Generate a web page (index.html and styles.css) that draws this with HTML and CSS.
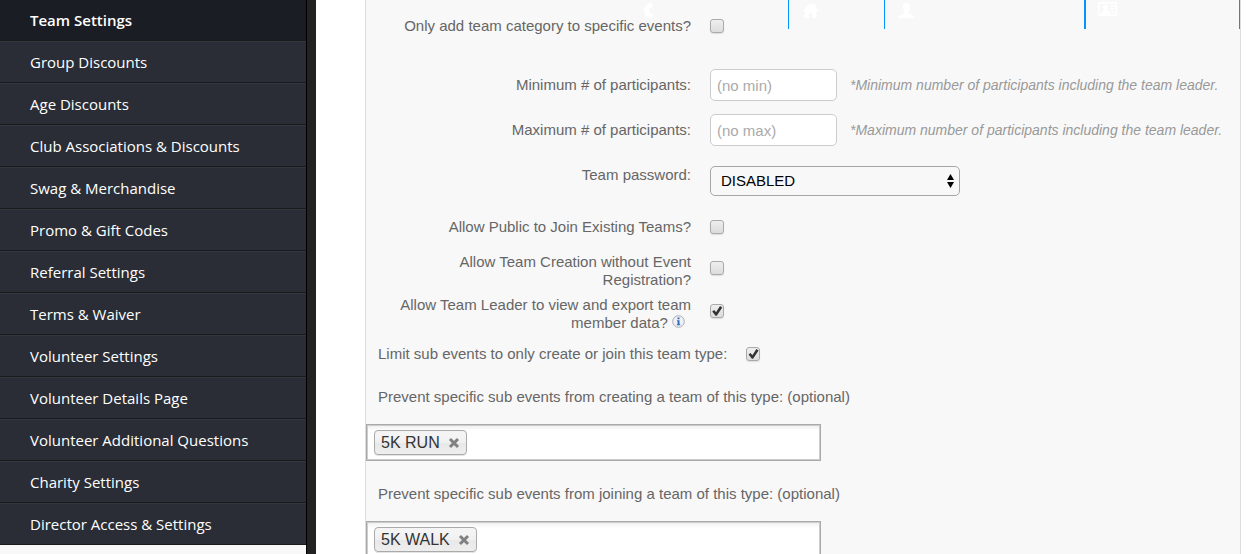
FILE: index.html
```html
<!DOCTYPE html>
<html lang="en">

<head>
    <meta charset="UTF-8">
    <meta name="viewport" content="width=device-width, initial-scale=1.0">
    <title>Team Settings</title>
    <link rel="stylesheet" href="styles.css">
</head>

<body>
    <nav class="sidebar">
        <ul class="menu">
            <li><a class="active" href="#">Team Settings</a></li>
            <li><a href="#">Group Discounts</a></li>
            <li><a href="#">Age Discounts</a></li>
            <li><a href="#">Club Associations &amp; Discounts</a></li>
            <li><a href="#">Swag &amp; Merchandise</a></li>
            <li><a href="#">Promo &amp; Gift Codes</a></li>
            <li><a href="#">Referral Settings</a></li>
            <li><a href="#">Terms &amp; Waiver</a></li>
            <li><a href="#">Volunteer Settings</a></li>
            <li><a href="#">Volunteer Details Page</a></li>
            <li><a href="#">Volunteer Additional Questions</a></li>
            <li><a href="#">Charity Settings</a></li>
            <li><a href="#">Director Access &amp; Settings</a></li>
        </ul>
    </nav>

    <main class="content">
        <form class="panel">
            <!-- floating top bar -->
            <div class="topbar">
                <a class="phone" href="#" aria-label="Call us">
                    <svg width="9" height="15" viewBox="0 0 9 15"><path d="M5 0 L8 0 L9 4 L6 5 Q4 7.5 6 10 L9 11 L8 15 L5 15 Q0 12 0 7.5 Q0 3 5 0Z" /></svg>
                </a>
                <a class="home" href="#" aria-label="Home">
                    <svg width="15" height="15" viewBox="0 0 15 15"><path d="M7.5 0 L10 2.4 V1 H12.5 V4.8 L15 7.4 V8.5 H13.3 V15 H9.2 V10 H5.8 V15 H1.7 V8.5 H0 V7.4Z" /></svg>
                </a>
                <a class="user" href="#" aria-label="Account">
                    <svg width="15" height="15" viewBox="0 0 15 15"><path d="M7.5 0 C10 0 11.3 1.8 11 4.5 C10.8 7 9.8 8 9.5 9 C9.5 10.5 10 11 12 11.5 C14 12 15 12.8 15 15 H0 C0 12.8 1 12 3 11.5 C5 11 5.5 10.5 5.5 9 C5.2 8 4.2 7 4 4.5 C3.7 1.8 5 0 7.5 0Z" /></svg>
                </a>
                <a class="card" href="#" aria-label="Contacts">
                    <svg width="19" height="14" viewBox="0 0 19 14"><path fill-rule="evenodd" d="M1 0H18Q19 0 19 1V13Q19 14 18 14H1Q0 14 0 13V1Q0 0 1 0Z M1.5 1.5V12.5H17.5V1.5Z" /><path d="M7.5 2.5C9.5 2.5 10 4 9.8 5.5C9.6 7 9 7.5 9 8.5C11 9.3 12.5 10 12.5 12.5H2.5C2.5 10 4 9.3 6 8.5C6 7.5 5.4 7 5.2 5.5C5 4 5.5 2.5 7.5 2.5ZM12.5 3H16V4.5H12.5ZM12.5 6H16V7.5H12.5ZM13.5 9H16V10.5H13.5Z" /></svg>
                </a>
            </div>

            <div class="row first">
                <label for="specific">Only add team category to specific events?</label>
                <input type="checkbox" id="specific">
            </div>
            <div class="row">
                <label for="min">Minimum # of participants:</label>
                <input type="text" id="min" placeholder="(no min)">
                <em class="hint">*Minimum number of participants including the team leader.</em>
            </div>
            <div class="row">
                <label for="max">Maximum # of participants:</label>
                <input type="text" id="max" placeholder="(no max)">
                <em class="hint">*Maximum number of participants including the team leader.</em>
            </div>
            <div class="row password">
                <label for="password">Team password:</label>
                <span class="select">
                    <select id="password">
                        <option>DISABLED</option>
                        <option>ENABLED</option>
                    </select>
                    <svg width="7" height="14" viewBox="0 0 7 14"><path d="M0 6 L3.5 0 L7 6Z M0 8 H7 L3.5 14Z" /></svg>
                </span>
            </div>
            <div class="row public">
                <label for="public">Allow Public to Join Existing Teams?</label>
                <input type="checkbox" id="public">
            </div>
            <div class="row creation two-line">
                <label for="creation">Allow Team Creation without Event Registration?</label>
                <input type="checkbox" id="creation">
            </div>
            <div class="row two-line">
                <label for="leader">Allow Team Leader to view and export team member data?
                    <svg class="info" width="13" height="13" viewBox="0 0 13 13"><circle cx="6.5" cy="6.5" r="5.8" fill="#eef1f6" stroke="#a9acb3" /><path d="M5.5 2.5H7.5V4.3H5.5ZM5 5.2H7.5V9.2H8.3V10.3H4.8V9.2H5.6V6.3H5Z" fill="#2f68b8" /></svg>
                </label>
                <input type="checkbox" id="leader" checked>
            </div>
            <div class="row limit">
                <label for="limit">Limit sub events to only create or join this team type:</label>
                <input type="checkbox" id="limit" checked>
            </div>

            <label class="title" for="creating">Prevent specific sub events from creating a team of this type: (optional)</label>
            <div class="chosen">
                <span class="choice">5K RUN
                    <button type="button" aria-label="Remove 5K RUN"><svg width="12" height="12" viewBox="0 0 12 12"><path d="M2 2 L10 10 M10 2 L2 10" /></svg></button>
                </span>
                <input type="text" id="creating">
            </div>

            <label class="title" for="joining">Prevent specific sub events from joining a team of this type: (optional)</label>
            <div class="chosen">
                <span class="choice">5K WALK
                    <button type="button" aria-label="Remove 5K WALK"><svg width="12" height="12" viewBox="0 0 12 12"><path d="M2 2 L10 10 M10 2 L2 10" /></svg></button>
                </span>
                <input type="text" id="joining">
            </div>
        </form>
    </main>
</body>

</html>
```
FILE: styles.css
```css
* {
    box-sizing: border-box;
}

body {
    margin: 0;
    height: 100vh;
    display: flex;
    overflow: hidden;
    background: #fff;
    color: #666;
    font-family: "Liberation Sans", Arial, sans-serif;
    font-size: 15px;
    line-height: 18px;
}

/* sidebar */
.sidebar {
    flex: none;
    width: 316px;
    background: #f8f8f8;
    border-right: 9px solid #222;
    box-shadow: inset -1px 0 #000;
}

.menu {
    margin: 0;
    padding: 0;
    list-style: none;
}

.menu a {
    display: block;
    margin-right: 1px;
    padding: 9px 30px;
    border-top: 1px solid #34373d;
    border-bottom: 1px solid #17191d;
    background: #2a2d35;
    color: #fff;
    font: 400 15px/22px "Open Sans", sans-serif;
    text-decoration: none;
}

.menu .active {
    border-top: 0;
    background: #1a1d24;
    font-weight: 600;
}

/* form panel */
.content {
    flex: 1;
    padding: 0 9px 0 49px;
}

.panel {
    position: relative;
    height: 100vh;
    overflow: hidden;
    background: #f8f8f8;
    border: solid #ddd;
    border-width: 0 1px;
}

.topbar {
    position: absolute;
    top: 0;
    right: 0;
    display: flex;
    height: 29px;
}

.topbar a {
    padding: 3px 14px;
    border-right: 1px solid #0095ff;
}

.topbar svg {
    display: block;
    fill: #fff;
}

.phone {
    width: 159px;
}

.home {
    width: 96px;
}

.topbar .user {
    width: 201px;
    border-right-width: 2px;
}

.topbar .card {
    width: 154px;
    padding: 2px 12px;
}

.row {
    display: grid;
    grid-template-columns: 313px auto 1fr;
    column-gap: 19px;
    align-items: center;
    justify-items: start;
    margin: 0 12px 13px;
}

.row label {
    justify-self: end;
    text-align: right;
}

.first {
    margin-top: 17px;
    margin-bottom: 34px;
}

.password {
    align-items: start;
    margin-top: 20px;
    margin-bottom: 22px;
}

.public {
    margin-bottom: 17px;
}

.creation {
    margin-bottom: 7px;
}

.two-line {
    align-items: start;
}

.limit {
    grid-template-columns: auto 1fr;
    margin-bottom: 25px;
}

input[type="checkbox"] {
    appearance: none;
    width: 14px;
    height: 14px;
    margin: 0;
    border: 1px solid #aaa;
    border-radius: 3px;
    background: linear-gradient(#eee, #dcdcdc);
    box-shadow: 0 1px 1px #ddd;
}

.two-line input[type="checkbox"] {
    margin-top: 8px;
}

input[type="checkbox"]:checked::before {
    content: "";
    display: block;
    height: 12px;
    background: #333;
    clip-path: polygon(10% 55%, 27% 42%, 42% 60%, 75% 8%, 94% 20%, 48% 90%, 38% 90%);
}

.row input[type="text"] {
    width: 127px;
    height: 32px;
    padding: 0 6px;
    border: 1px solid #ccc;
    border-radius: 5px;
    background: #fff;
    font: inherit;
}

.row ::placeholder {
    color: #aaa;
}

.hint {
    margin-left: -6px;
    color: #999;
    font-size: 14px;
}

.select {
    position: relative;
}

.select select {
    display: block;
    appearance: none;
    width: 250px;
    height: 30px;
    padding: 0 10px;
    border: 1px solid #a6a6a6;
    border-radius: 5px;
    background: #f8f8f8;
    color: #000;
    font: inherit;
}

.select svg {
    position: absolute;
    top: 8px;
    right: 6px;
    pointer-events: none;
}

.info {
    margin-right: 6px;
}

/* multi selects */
.title {
    display: block;
    margin: 24px 12px 18px;
}

.chosen {
    display: flex;
    align-items: center;
    width: 455px;
    height: 37px;
    padding: 0 7px;
    border: 1px solid #aaa;
    box-shadow: inset 0 0 0 1px #ccc;
    background: linear-gradient(#eee, #fff 6px);
}

.choice {
    display: flex;
    align-items: center;
    gap: 8px;
    height: 25px;
    padding: 0 6px;
    border: 1px solid #aaa;
    border-radius: 4px;
    background: linear-gradient(#f4f4f4 20%, #f0f0f0 50%, #e8e8e8 52%, #eee);
    box-shadow: 0 1px 0 #e4e4e4;
    color: #333;
    font-size: 16px;
}

.choice button {
    padding: 0;
    border: 0;
    background: none;
}

.choice svg {
    display: block;
    fill: none;
    stroke: #808080;
    stroke-width: 3;
}

.chosen input {
    flex: 1;
    min-width: 0;
    border: 0;
    background: none;
    font: inherit;
}
```
